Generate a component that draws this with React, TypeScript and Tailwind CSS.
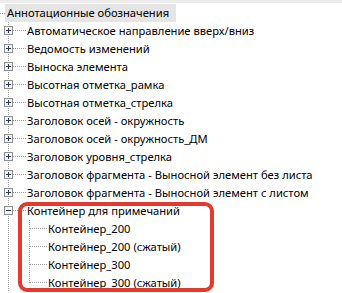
const ITEMS = [
  "Автоматическое направление вверх/вниз",
  "Ведомость изменений",
  "Выноска элемента",
  "Высотная отметка_рамка",
  "Высотная отметка_стрелка",
  "Заголовок осей - окружность",
  "Заголовок осей - окружность_ДМ",
  "Заголовок уровня_стрелка",
  "Заголовок фрагмента - Выносной элемент без листа",
  "Заголовок фрагмента - Выносной элемент с листом",
];

const CHILDREN = [
  "Контейнер_200",
  "Контейнер_200 (сжатый)",
  "Контейнер_300",
  "Контейнер_300 (сжатый)",
];

const LINE = "#a0a0a0";

function Box({ open }: { open?: boolean }) {
  return (
    <g>
      <rect x="4.5" y="4.5" width="8" height="8" fill="#f4f4f4" stroke="#8e8f8f" />
      <line x1="6" y1="8.5" x2="11" y2="8.5" stroke="#2d3b52" />
      {!open && <line x1="8.5" y1="6" x2="8.5" y2="11" stroke="#2d3b52" />}
    </g>
  );
}

function Connector({ open }: { open?: boolean }) {
  return (
    <svg width="27" height="18" className="shrink-0">
      <line x1="8.5" y1="0" x2="8.5" y2="18" stroke={LINE} strokeDasharray="1 1" />
      <line x1="13" y1="8.5" x2="26" y2="8.5" stroke={LINE} strokeDasharray="1 1" />
      <Box open={open} />
    </svg>
  );
}

function ChildConnector({ last }: { last?: boolean }) {
  return (
    <svg width="48" height="18" className="shrink-0">
      <line x1="8.5" y1="0" x2="8.5" y2="18" stroke={LINE} strokeDasharray="1 1" />
      <line x1="29.5" y1="0" x2="29.5" y2={last ? 9 : 18} stroke={LINE} strokeDasharray="1 1" />
      <line x1="30" y1="8.5" x2="47" y2="8.5" stroke={LINE} strokeDasharray="1 1" />
    </svg>
  );
}

function Label({ children }: { children: string }) {
  return <span className="whitespace-nowrap text-[11.2px] leading-[18px] text-black">{children}</span>;
}

export default function App() {
  return (
    <div
      className="relative h-[293px] w-[342px] overflow-hidden bg-white"
      style={{ fontFamily: '"Noto Sans", "Segoe UI", sans-serif' }}
    >
      <div className="h-[3px] bg-[#ececec]" />
      <div className="flex h-[19px] items-center">
        <svg width="5" height="19" className="shrink-0">
          <line x1="0" y1="10.5" x2="5" y2="10.5" stroke={LINE} strokeDasharray="1 1" />
        </svg>
        <div className="flex h-[18px] items-center bg-[#e5e5e5] pl-[2px] pr-[7px] pt-[1px]">
          <Label>Аннотационные обозначения</Label>
        </div>
      </div>
      <div className="flex flex-col">
        {ITEMS.map((t) => (
          <div key={t} className="flex h-[18px] items-center">
            <Connector />
            <Label>{t}</Label>
          </div>
        ))}
        <div className="flex h-[18px] items-center">
          <Connector open />
          <Label>Контейнер для примечаний</Label>
        </div>
        {CHILDREN.map((t, i) => (
          <div key={t} className="flex h-[18px] items-center">
            <ChildConnector last={i === CHILDREN.length - 1} />
            <Label>{t}</Label>
          </div>
        ))}
      </div>
      <div className="absolute left-[18px] top-[202px] h-[90px] w-[196px] rounded-[9px] border-4 border-[#e5392f]" />
    </div>
  );
}
